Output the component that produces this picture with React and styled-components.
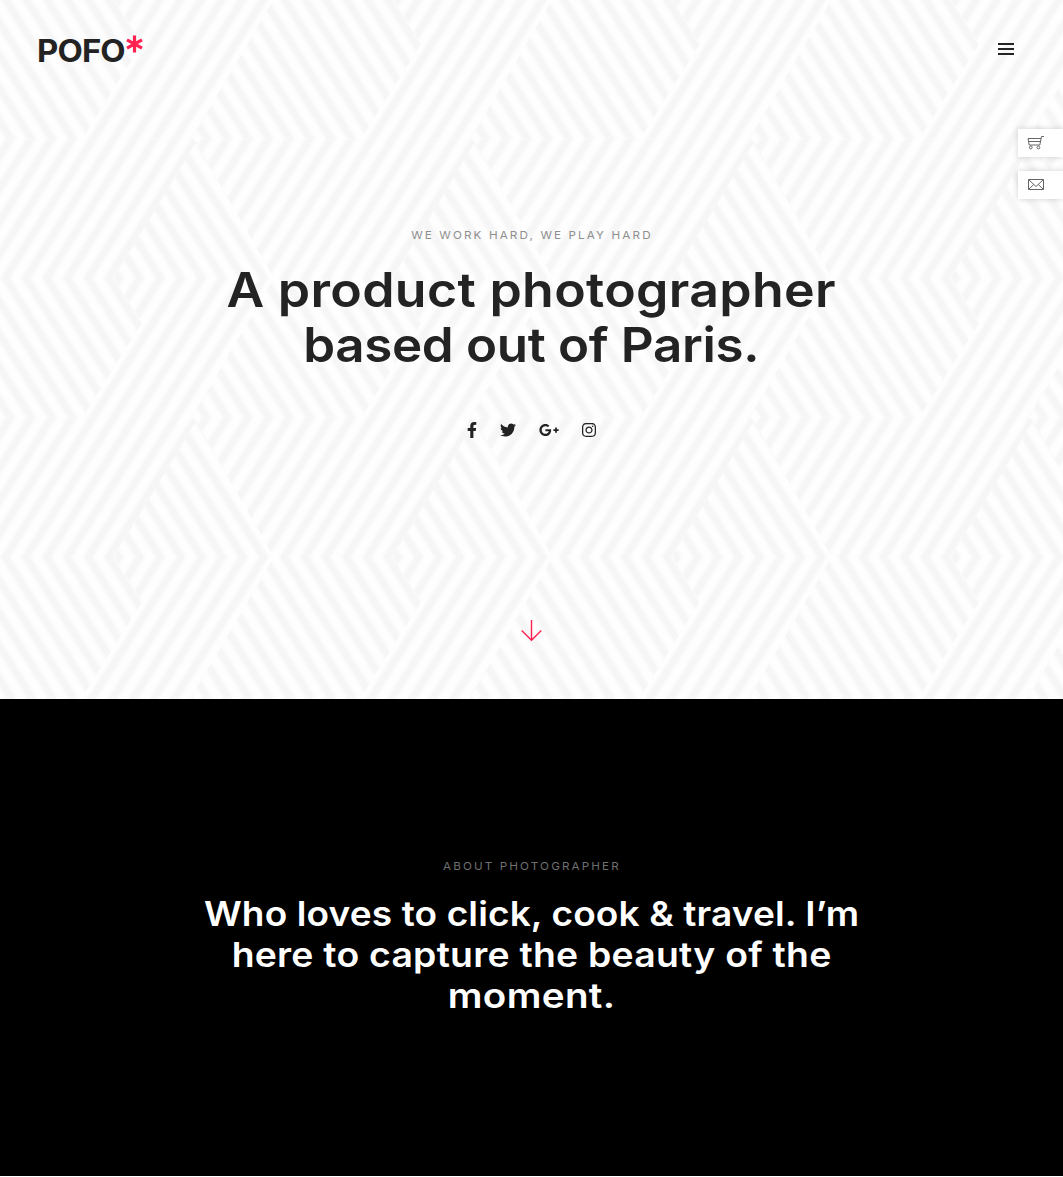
import React from "react";
import styled, { createGlobalStyle } from "styled-components";
import { FaFacebookF, FaTwitter, FaGooglePlusG, FaInstagram } from "react-icons/fa";

const Global = createGlobalStyle`
  * { box-sizing: border-box; }
  body { margin: 0; background: #fff; font-family: Inter, "Open Sans", sans-serif; color: #232323; }
  h1, h2, p { margin: 0; }
`;

const Hero = styled.section`
  position: relative;
  height: 699px;
  display: flex;
  flex-direction: column;
  align-items: center;
  overflow: hidden;
  isolation: isolate;
`;

const Backdrop = styled.svg`
  position: absolute;
  inset: 0;
  width: 100%;
  height: 100%;
  z-index: -1;
`;

const Header = styled.header`
  width: 100%;
  height: 98px;
  padding: 0 49px 0 37px;
  display: flex;
  align-items: center;
  justify-content: space-between;
`;

const Logo = styled.a`
  display: flex;
  align-items: flex-start;
  padding-top: 3px;
  font-size: 31px;
  line-height: 34px;
  font-weight: 700;
  letter-spacing: -0.8px;
  svg { margin: 1px 0 0 6px; }
`;

const Wordmark = styled.span`
  display: block;
  transform: scaleX(1.06);
  transform-origin: left;
`;

const MenuButton = styled.button`
  width: 16px;
  padding: 0;
  border: 0;
  background: none;
  display: grid;
  gap: 3px;
`;

const MenuBar = styled.span`
  height: 2px;
  background: #232323;
`;

const Kicker = styled.p`
  margin-top: ${(p) => p.$top}px;
  font-size: 11px;
  line-height: 16px;
  letter-spacing: 2px;
  text-transform: uppercase;
  transform: scaleX(1.06);
  color: ${(p) => p.$color};
`;

const Title = styled.h1`
  margin-top: 19px;
  font-size: 48px;
  line-height: 55px;
  font-weight: 600;
  text-align: center;
`;

const Statement = styled.h2`
  margin-top: 19px;
  font-size: 34px;
  line-height: 41px;
  font-weight: 600;
  text-align: center;
  color: #fff;
`;

const Line = styled.span`
  display: block;
  white-space: nowrap;
  letter-spacing: ${(p) => p.$track}px;
  transform: scaleX(${(p) => p.$wide || 1});
`;

const Social = styled.nav`
  margin-top: 50px;
  height: 16px;
  display: flex;
  gap: 23px;
`;

const SocialLink = styled.a`
  width: ${(p) => p.$w}px;
  display: flex;
  justify-content: center;
  svg { flex: none; width: ${(p) => p.$icon || p.$w}px; height: 16px; }
`;

const ScrollDown = styled.a`
  margin-top: 182px;
  height: 22px;
  svg { display: block; }
`;

const SideTabs = styled.aside`
  position: absolute;
  top: 129px;
  right: 0;
  display: grid;
  gap: 14px;
`;

const SideTab = styled.a`
  width: 45px;
  height: 28px;
  padding: 0 0 2px 9px;
  display: flex;
  align-items: center;
  background: #fff;
  box-shadow: 0 0 6px rgba(0, 0, 0, 0.18);
`;

const About = styled.section`
  height: 477px;
  background: #000;
  display: flex;
  flex-direction: column;
  align-items: center;
`;

/* Woven chevron backdrop: one 279px tile, striped in two directions. */
const TILE = 279;
const HALF = 139.5;
const PITCH = TILE / 13.5;
const SHIFT = PITCH * 4.25;

const AREAS = [
  { id: "a", y: 0, dir: 1, phase: 5.3, pts: `-5,0 114,0 142,44.5 82.2,${HALF} -87,${HALF}` },
  { id: "b", y: 0, dir: -1, phase: 15.7, pts: `114,0 274,0 192,${HALF} 82.2,${HALF} 142,44.5` },
  { id: "c", y: HALF, dir: -1, phase: 5.3 + SHIFT, pts: `-5,279 114,279 196,143 192,${HALF} -87,${HALF} -83,143` },
  { id: "d", y: HALF, dir: 1, phase: 15.7 - SHIFT, pts: "114,279 274,279 196,143" },
];

function stripes({ y, dir, phase }) {
  let d = "";
  for (let n = -20; n < 28; n++) {
    const x = phase + n * PITCH;
    d += `M${(x - dir * SHIFT * 0.1).toFixed(2)} ${y - HALF * 0.1}L${(x + dir * SHIFT * 1.1).toFixed(2)} ${y + HALF * 1.1}`;
  }
  return d;
}

function Weave() {
  return (
    <Backdrop aria-hidden="true">
      <defs>
        {AREAS.map((a) => (
          <clipPath id={`area-${a.id}`} key={a.id}><polygon points={a.pts} /></clipPath>
        ))}
        <g id="weave">
          {AREAS.map((a) => (
            <g key={a.id} clipPath={`url(#area-${a.id})`} fill="none">
              <path d={stripes(a)} stroke="#fbfbfb" strokeWidth="10.4" />
              <path d={stripes(a)} stroke="#f6f6f6" strokeWidth="6.4" />
            </g>
          ))}
        </g>
        <pattern id="tile" width={TILE} height={TILE} y="-1" patternUnits="userSpaceOnUse">
          <rect width={TILE} height={TILE} fill="#fefefe" />
          <use href="#weave" />
          <use href="#weave" x={TILE} />
        </pattern>
      </defs>
      <rect width="100%" height="100%" fill="url(#tile)" />
    </Backdrop>
  );
}

export default function App() {
  return (
    <>
      <Global />
      <Hero>
        <Weave />
        <Header>
          <Logo>
            <Wordmark>POFO</Wordmark>
            <svg width="17" height="18" viewBox="0 0 17 18" stroke="#ff214f" strokeWidth="3.2">
              <path d="M8.5 0.5v17M1 4.8l15 8.4M16 4.8L1 13.2" />
            </svg>
          </Logo>
          <MenuButton aria-label="Menu"><MenuBar /><MenuBar /><MenuBar /></MenuButton>
        </Header>
        <Kicker $top={129} $color="#8f8f8f">We work hard, we play hard</Kicker>
        <Title>
          <Line $track={0.3} $wide={1.08}>A product photographer</Line>
          <Line $track={-0.3} $wide={1.064}>based out of Paris.</Line>
        </Title>
        <Social>
          <SocialLink $w={9} $icon={10}><FaFacebookF /></SocialLink>
          <SocialLink $w={16}><FaTwitter /></SocialLink>
          <SocialLink $w={20}><FaGooglePlusG /></SocialLink>
          <SocialLink $w={14}><FaInstagram /></SocialLink>
        </Social>
        <ScrollDown>
          <svg width="22" height="22" viewBox="0 0 22 22" fill="none" stroke="#ff214f" strokeWidth="1.4">
            <path d="M10.5 0v20.5M0.7 10.5l9.8 9.8 9.8-9.8" />
          </svg>
        </ScrollDown>
        <SideTabs>
          <SideTab>
            <svg width="18" height="15" viewBox="0 0 18 15" fill="none" stroke="#666" strokeWidth="1">
              <path d="M17 1.5h-2.5L12.8 10H2.2L1 3.5h13M2 6.5h11.5" />
              <circle cx="3.8" cy="12.5" r="1.4" />
              <circle cx="11.4" cy="12.5" r="1.4" />
            </svg>
          </SideTab>
          <SideTab>
            <svg width="18" height="13" viewBox="0 0 18 13" fill="none" stroke="#666" strokeWidth="1">
              <path d="M1.5 1.5h15v10h-15zM1.5 1.5L9 8.5l7.5-7M1.5 11.5l5.2-5M16.5 11.5l-5.2-5" />
            </svg>
          </SideTab>
        </SideTabs>
      </Hero>
      <About>
        <Kicker $top={159} $color="#6f6f6f">About photographer</Kicker>
        <Statement>
          <Line $track={0.1} $wide={1.09}>Who loves to click, cook &amp; travel. I’m</Line>
          <Line $track={0.2} $wide={1.1}>here to capture the beauty of the</Line>
          <Line $track={0.3} $wide={1.135}>moment.</Line>
        </Statement>
      </About>
    </>
  );
}
